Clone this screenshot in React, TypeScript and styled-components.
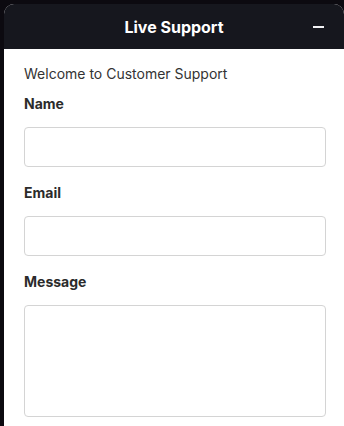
import React from "react";
import styled, { createGlobalStyle } from "styled-components";

const Global = createGlobalStyle`
  html, body { margin: 0; padding: 0; background: #0c0a10; }
  body { font-family: Inter, "Noto Sans", sans-serif; overflow: hidden; }
  * { box-sizing: border-box; }
`;

const Page = styled.div`
  width: 344px;
  height: 426px;
  padding: 4px 0 0 4px;
  background: #0c0a10;
  overflow: hidden;
`;

const Panel = styled.div`
  width: 340px;
  height: 440px;
  background: #fff;
  border-radius: 10px 10px 0 0;
  overflow: hidden;
  display: flex;
  flex-direction: column;
`;

const Header = styled.div`
  height: 45px;
  background: #16171e;
  color: #fff;
  display: flex;
  align-items: center;
  justify-content: center;
  position: relative;
  font-weight: 700;
  font-size: 16px;
`;

const MinButton = styled.button`
  position: absolute;
  right: 19px;
  top: 50%;
  transform: translateY(-50%);
  width: 14px;
  height: 14px;
  padding: 0;
  border: none;
  background: transparent;
  display: flex;
  align-items: center;
  justify-content: center;
  &::before {
    content: "";
    width: 11px;
    height: 2px;
    background: #f2f2f5;
  }
`;

const Body = styled.div`
  padding: 16px 20px 0 20px;
  display: flex;
  flex-direction: column;
  color: #333;
`;

const Welcome = styled.p`
  margin: 0 0 12px;
  font-size: 14px;
  line-height: 18px;
  color: #333;
`;

const Label = styled.label`
  font-size: 14px;
  font-weight: 700;
  line-height: 18px;
  color: #2b2b2b;
  margin-bottom: 14px;
`;

const Input = styled.input`
  width: 302px;
  height: 40px;
  border: 1px solid #d4d4d4;
  border-radius: 4px;
  margin-bottom: 17px;
  font: inherit;
`;

const TextArea = styled.textarea`
  width: 302px;
  height: 112px;
  border: 1px solid #d4d4d4;
  border-radius: 4px;
  resize: none;
  font: inherit;
`;

export default function App() {
  return (
    <Page>
      <Global />
      <Panel>
        <Header>
          Live Support
          <MinButton aria-label="Minimize" />
        </Header>
        <Body>
          <Welcome>Welcome to Customer Support</Welcome>
          <Label>Name</Label>
          <Input />
          <Label>Email</Label>
          <Input />
          <Label>Message</Label>
          <TextArea />
        </Body>
      </Panel>
    </Page>
  );
}
